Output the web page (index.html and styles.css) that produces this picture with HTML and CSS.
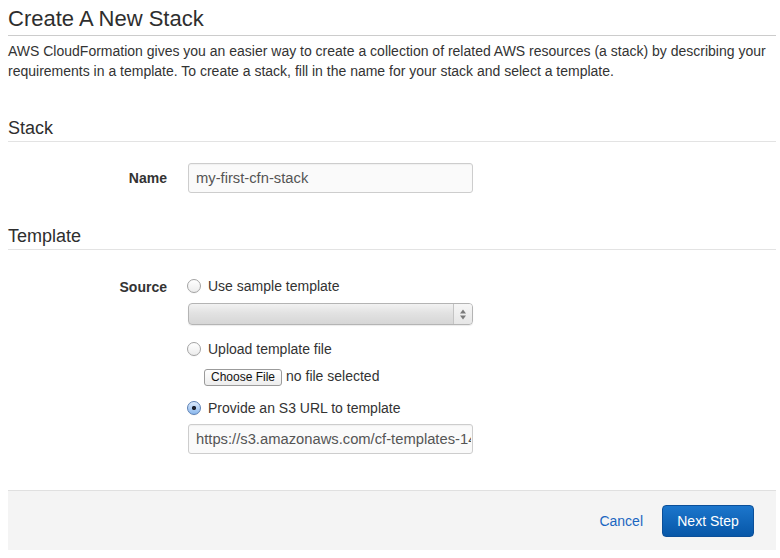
FILE: index.html
```html
<!DOCTYPE html>
<html>
<head>
<meta charset="utf-8">
<link rel="stylesheet" href="styles.css">
</head>
<body>
<div class="page">
  <h1 class="title">Create A New Stack</h1>
  <p class="intro">AWS CloudFormation gives you an easier way to create a collection of related AWS resources (a stack) by describing your requirements in a template. To create a stack, fill in the name for your stack and select a template.</p>

  <h2 class="section">Stack</h2>
  <div class="row row-name">
    <label class="label" for="name">Name</label>
    <div class="field">
      <input id="name" class="text-input" type="text" value="my-first-cfn-stack">
    </div>
  </div>

  <h2 class="section section-template">Template</h2>
  <div class="row row-source">
    <div class="label label-source">Source</div>
    <div class="field">
      <label class="radio-line"><input type="radio" name="src" class="radio"><span>Use sample template</span></label>
      <div class="select">
        <div class="select-body"></div>
        <div class="select-arrows">
          <svg width="8" height="11" viewBox="0 0 8 11"><path d="M4 0.5 L7 4.5 H1 Z" fill="#7a7a7a"/><path d="M4 10.5 L7 6.5 H1 Z" fill="#7a7a7a"/></svg>
        </div>
      </div>
      <label class="radio-line radio-upload"><input type="radio" name="src" class="radio"><span>Upload template file</span></label>
      <div class="file-line">
        <button class="file-btn" type="button">Choose File</button>
        <span class="file-status">no file selected</span>
      </div>
      <label class="radio-line radio-s3"><input type="radio" name="src" class="radio" checked><span>Provide an S3 URL to template</span></label>
      <input class="text-input url-input" type="text" value="https://s3.amazonaws.com/cf-templates-14fjw8x2a9b1c-us-east-1/template.json">
    </div>
  </div>

  <div class="footer">
    <a class="cancel" href="#">Cancel</a>
    <button class="next" type="button">Next Step</button>
  </div>
</div>
</body>
</html>
```

FILE: styles.css
```css
html, body {
  margin: 0;
  padding: 0;
  background: #fff;
}
body {
  font-family: "Liberation Sans", Arial, sans-serif;
  color: #333;
  font-size: 14px;
}
.page {
  margin: 0 4px 0 8px;
  padding-bottom: 8px;
}
.title {
  margin: 6px 0 0;
  font-size: 22px;
  line-height: 26px;
  font-weight: normal;
  color: #2e2e2e;
  padding-bottom: 3px;
  border-bottom: 1px solid #cccccc;
}
.intro {
  margin: 5px 0 0;
  font-size: 14px;
  line-height: 20px;
  color: #333;
}
.section {
  margin: 37px 0 0;
  font-size: 18px;
  line-height: 20px;
  font-weight: normal;
  color: #2e2e2e;
  padding-bottom: 3px;
  border-bottom: 1px solid #e3e3e3;
}
.section-template {
  margin-top: 33px;
}
.row {
  display: flex;
  gap: 21px;
}
.row-name {
  margin-top: 21px;
  align-items: center;
}
.label {
  width: 159px;
  flex: none;
  text-align: right;
  font-weight: bold;
  font-size: 14px;
  color: #333;
}
.label-source {
  line-height: 20px;
  padding-top: 1px;
}
.row-source {
  margin-top: 26px;
}
.field {
  display: flex;
  flex-direction: column;
  align-items: flex-start;
}
.text-input {
  width: 285px;
  height: 30px;
  box-sizing: border-box;
  border: 1px solid #cdcdcd;
  border-radius: 3px;
  background: #fafafa;
  box-shadow: inset 0 1px 1px rgba(0,0,0,0.04);
  font-family: "Liberation Sans", Arial, sans-serif;
  font-size: 14.75px;
  color: #555;
  padding: 0 4px 0 7px;
  margin: 0;
  outline: none;
}
.url-input {
  padding-right: 1px;
}
.radio-line {
  display: flex;
  align-items: center;
  gap: 7px;
  line-height: 20px;
  font-size: 14px;
  color: #333;
  margin-left: -1px;
}
.radio {
  appearance: none;
  -webkit-appearance: none;
  width: 14px;
  height: 14px;
  margin: 0;
  border-radius: 50%;
  box-sizing: border-box;
  border: 1px solid #a3a3a3;
  background: linear-gradient(#ffffff, #ececec);
  box-shadow: 0 1px 0 rgba(0,0,0,0.03);
}
.radio:checked {
  border-color: #5b80b4;
  background:
    radial-gradient(circle at 50% 50%, #1d2330 0 1.8px, transparent 2.4px),
    linear-gradient(#dbe9fb, #8cb9ee);
}
.select {
  margin-top: 7px;
  width: 285px;
  height: 22px;
  box-sizing: border-box;
  display: flex;
  border: 1px solid #b4b4b4;
  border-radius: 4px;
  background: linear-gradient(#f2f2f2, #e2e2e2 45%, #d6d6d6);
  box-shadow: 0 1px 1px rgba(0,0,0,0.08);
  overflow: hidden;
}
.select-body {
  flex: 1;
}
.select-arrows {
  width: 18px;
  border-left: 1px solid #c4c4c4;
  display: flex;
  align-items: center;
  justify-content: center;
  background: linear-gradient(#f6f6f6, #e6e6e6);
}
.radio-upload {
  margin-top: 14px;
}
.file-line {
  margin-top: 10px;
  margin-left: 16px;
  display: flex;
  align-items: center;
  gap: 4px;
}
.file-btn {
  height: 17px;
  box-sizing: border-box;
  padding: 0 6px;
  border: 1px solid #9b9b9b;
  border-radius: 3px;
  background: linear-gradient(#ffffff, #ededed);
  font-family: "Liberation Sans", Arial, sans-serif;
  font-size: 12px;
  line-height: 15px;
  color: #111;
}
.file-status {
  font-size: 14px;
  color: #333;
  position: relative;
  top: -2px;
}
.radio-s3 {
  margin-top: 12px;
}
.url-input {
  margin-top: 6px;
}
.footer {
  margin-top: 36px;
  height: 59px;
  background: #f4f4f4;
  border-top: 1px solid #e0e0e0;
  display: flex;
  align-items: center;
  justify-content: flex-end;
  gap: 19px;
  padding-right: 22px;
}
.cancel {
  color: #1a66c1;
  text-decoration: none;
  font-size: 14px;
}
.next {
  width: 92px;
  height: 32px;
  border: 1px solid #0b4f99;
  border-radius: 4px;
  background: linear-gradient(#1c76cc, #0757a8);
  color: #fff;
  font-family: "Liberation Sans", Arial, sans-serif;
  font-size: 14px;
  padding: 0;
}
```
